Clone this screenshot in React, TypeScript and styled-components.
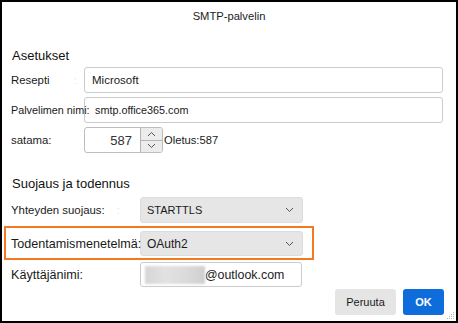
import { createGlobalStyle, styled } from "styled-components";

const GlobalStyle = createGlobalStyle`
    html, body {
        margin: 0;
        padding: 0;
        background: #ffffff;
    }
    body {
        font-family: "Liberation Sans", Arial, sans-serif;
        color: #1a1a1a;
    }
`;

function Chevron(props: { up?: boolean }) 
{
    return (
        <svg width="9" height="6" viewBox="0 0 9 6">
            <polyline
                points={props.up ? "1,5 4.5,1.5 8,5" : "1,1 4.5,4.5 8,1"}
                fill="none"
                stroke="#555"
                strokeWidth="1"
            />
        </svg>
    );
}

function ResizeGrip() 
{
    return (
        <Grip width="8" height="8" viewBox="0 0 8 8">
            <rect x="6" y="0" width="1" height="1" fill="#b8b8b8"/>
            <rect x="4" y="2" width="1" height="1" fill="#b8b8b8"/>
            <rect x="6" y="2" width="1" height="1" fill="#b8b8b8"/>
            <rect x="2" y="4" width="1" height="1" fill="#b8b8b8"/>
            <rect x="4" y="4" width="1" height="1" fill="#b8b8b8"/>
            <rect x="6" y="4" width="1" height="1" fill="#b8b8b8"/>
            <rect x="0" y="6" width="1" height="1" fill="#b8b8b8"/>
            <rect x="2" y="6" width="1" height="1" fill="#b8b8b8"/>
            <rect x="4" y="6" width="1" height="1" fill="#b8b8b8"/>
            <rect x="6" y="6" width="1" height="1" fill="#b8b8b8"/>
        </Grip>
    );
}

export default function App() 
{
    return (
        <>
            <GlobalStyle/>
            <Dialog>
                <TitleBar>SMTP-palvelin</TitleBar>
                <Body>
                    <SectionTitle $top={16}>Asetukset</SectionTitle>

                    <FieldRow $labelWidth={73} $top={1}>
                        <Label>Resepti<FaintMark>:</FaintMark></Label>
                        <TextBox $width={359}>Microsoft</TextBox>
                    </FieldRow>

                    <FieldRow $labelWidth={73} $top={4}>
                        <Label $over $size={10.8}>Palvelimen nimi:</Label>
                        <TextBox $width={359} $indent={10} $size={10.8}>smtp.office365.com</TextBox>
                    </FieldRow>

                    <FieldRow $labelWidth={73} $top={4}>
                        <Label>satama:</Label>
                        <PortGroup>
                            <Spinner>
                                <SpinValue>587</SpinValue>
                                <SpinButtons>
                                    <SpinButton><Chevron up/></SpinButton>
                                    <SpinButton><Chevron/></SpinButton>
                                </SpinButtons>
                            </Spinner>
                            <DefaultNote>Oletus:587</DefaultNote>
                        </PortGroup>
                    </FieldRow>

                    <SectionTitle $top={21}>Suojaus ja todennus</SectionTitle>

                    <FieldRow $labelWidth={129} $top={3}>
                        <Label>Yhteyden suojaus:<FaintMark $gap={12}>:</FaintMark></Label>
                        <Select $height={26}>
                            <span>STARTTLS</span>
                            <Chevron/>
                        </Select>
                    </FieldRow>

                    <Highlight>
                        <FieldRow $labelWidth={129} $top={0} $height={25}>
                            <Label $over $size={12.6}>Todentamismenetelmä:</Label>
                            <Select $height={25} $size={12}>
                                <span>OAuth2</span>
                                <Chevron/>
                            </Select>
                        </FieldRow>
                    </Highlight>

                    <FieldRow $labelWidth={129} $top={2} $height={25}>
                        <Label $size={12.6}>Käyttäjänimi:</Label>
                        <UserBox>
                            <Blurred/>
                            <span>@outlook.com</span>
                        </UserBox>
                    </FieldRow>

                    <Buttons>
                        <Button>Peruuta</Button>
                        <Button $primary>OK</Button>
                    </Buttons>
                </Body>
                <ResizeGrip/>
            </Dialog>
        </>
    );
}

const Dialog = styled.div`
    position: relative;
    width: 458px;
    height: 323px;
    box-sizing: border-box;
    border: 2px solid #000;
    background: #fff;
    display: flex;
    flex-direction: column;
    overflow: hidden;
`;

const TitleBar = styled.div`
    height: 28px;
    display: flex;
    align-items: center;
    justify-content: center;
    font-size: 11.2px;
    color: #1a1a1a;
`;

const Body = styled.div`
    display: flex;
    flex-direction: column;
    padding: 0 13px 0 9px;
`;

const SectionTitle = styled.div<{ $top: number }>`
    margin-top: ${p => p.$top}px;
    margin-left: 1px;
    height: 20px;
    line-height: 20px;
    font-size: 13px;
    color: #111;
`;

const FieldRow = styled.div<{ $labelWidth: number; $top: number; $height?: number }>`
    display: grid;
    grid-template-columns: ${p => p.$labelWidth}px auto;
    align-items: center;
    height: ${p => p.$height ?? 26}px;
    margin-top: ${p => p.$top}px;
`;

const Label = styled.div<{ $over?: boolean; $size?: number }>`
    white-space: nowrap;
    font-size: ${p => p.$size ?? 11.4}px;
    color: #1a1a1a;
    position: ${p => p.$over ? "relative" : "static"};
    z-index: ${p => p.$over ? 1 : "auto"};
`;

const FaintMark = styled.span<{ $gap?: number }>`
    color: #e4e4e4;
    margin-left: ${p => p.$gap ?? 24}px;
`;

const TextBox = styled.div<{ $width: number; $indent?: number; $size?: number }>`
    width: ${p => p.$width}px;
    height: 26px;
    box-sizing: border-box;
    border: 1px solid #cbcbcb;
    border-radius: 3px;
    background: #fff;
    display: flex;
    align-items: center;
    padding-left: ${p => p.$indent ?? 7}px;
    font-size: ${p => p.$size ?? 11.5}px;
    color: #1a1a1a;
`;

const PortGroup = styled.div`
    display: flex;
    align-items: center;
`;

const Spinner = styled.div`
    width: 79px;
    height: 26px;
    box-sizing: border-box;
    border: 1px solid #bdbdbd;
    border-radius: 3px;
    display: flex;
    overflow: hidden;
`;

const SpinValue = styled.div`
    flex: 1;
    display: flex;
    align-items: center;
    justify-content: flex-end;
    padding-right: 8px;
    font-size: 13px;
    color: #333;
`;

const SpinButtons = styled.div`
    width: 21px;
    display: flex;
    flex-direction: column;
    border-left: 1px solid #b5b5b5;
`;

const SpinButton = styled.div`
    flex: 1;
    display: flex;
    align-items: center;
    justify-content: center;
    background: #ececec;

    & + & {
        border-top: 1px solid #b5b5b5;
    }
`;

const DefaultNote = styled.span`
    margin-left: 1px;
    font-size: 11.2px;
    color: #1a1a1a;
`;

const Select = styled.div<{ $height: number; $size?: number }>`
    width: 163px;
    height: ${p => p.$height}px;
    box-sizing: border-box;
    border: 1px solid #dcdcdc;
    border-radius: 3px;
    background: #e6e6e6;
    display: flex;
    align-items: center;
    justify-content: space-between;
    padding: 0 8px 0 6px;
    font-size: ${p => p.$size ?? 11}px;
    color: #1a1a1a;
`;

const Highlight = styled.div`
    margin: 3px 0 0 -7px;
    width: 310px;
    box-sizing: border-box;
    border: 2px solid #f47a22;
    padding: 3px 0 2px 5px;
`;

const UserBox = styled.div`
    width: 162px;
    height: 25px;
    box-sizing: border-box;
    border: 1px solid #cbcbcb;
    border-radius: 3px;
    display: flex;
    align-items: center;
    padding-left: 4px;
    font-size: 12.4px;
    color: #222;
`;

const Blurred = styled.div`
    width: 60px;
    height: 18px;
    background: linear-gradient(90deg, #d6d6d6 0%, #e2e2e2 35%, #dadada 70%, #cfcfcf 100%);
    filter: blur(1px);
`;

const Buttons = styled.div`
    display: flex;
    justify-content: flex-end;
    gap: 7px;
    margin: 2px -1px 0 0;
`;

const Button = styled.div<{ $primary?: boolean }>`
    height: 26px;
    width: ${p => p.$primary ? 41 : 61}px;
    box-sizing: border-box;
    border-radius: 3px;
    display: flex;
    align-items: center;
    justify-content: center;
    font-size: 11px;
    font-weight: ${p => p.$primary ? "bold" : "normal"};
    background: ${p => p.$primary ? "#0f6cdb" : "#e5e5e5"};
    color: ${p => p.$primary ? "#fff" : "#1a1a1a"};
`;

const Grip = styled.svg`
    position: absolute;
    right: 1px;
    bottom: 1px;
`;
